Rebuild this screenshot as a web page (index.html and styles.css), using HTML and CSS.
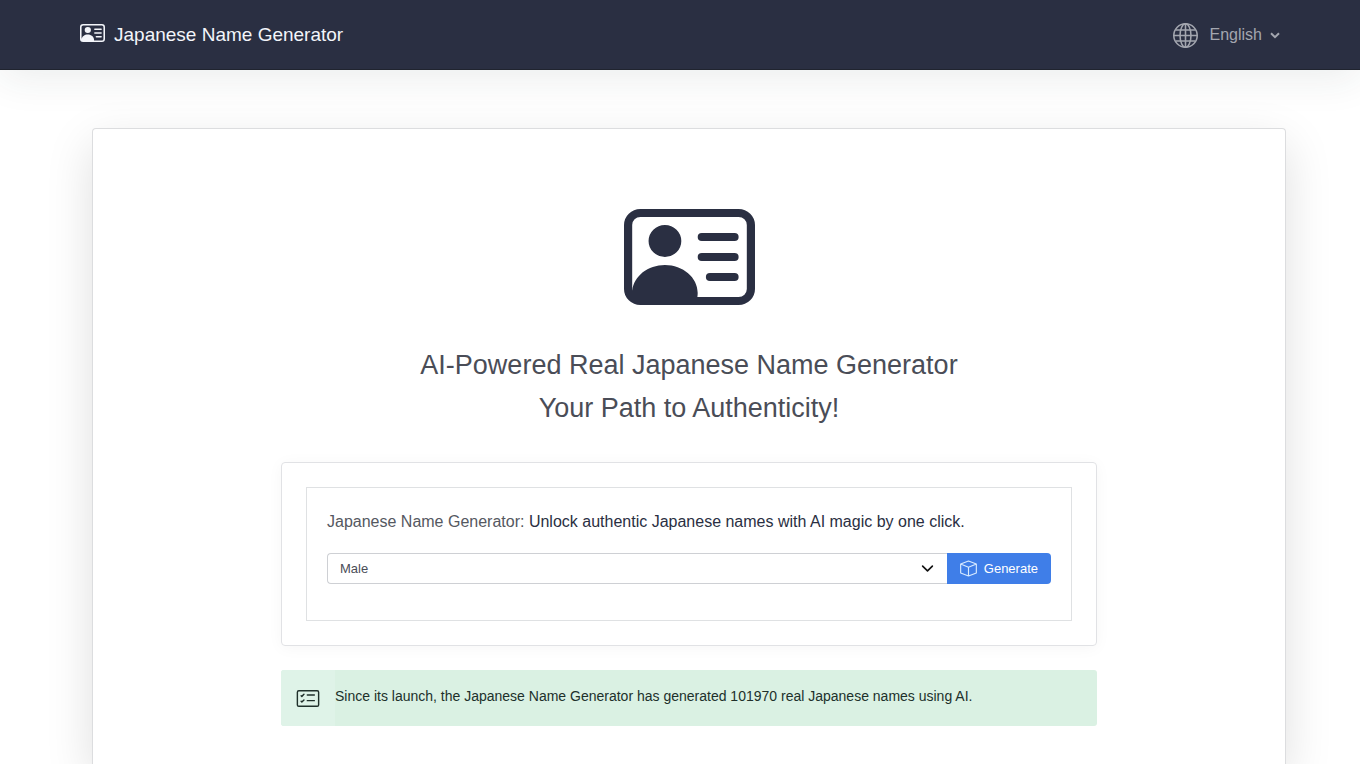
FILE: index.html
```html
<!DOCTYPE html>
<html lang="en">
<head>
<meta charset="utf-8">
<meta name="viewport" content="width=device-width, initial-scale=1">
<title>Japanese Name Generator</title>
<link rel="stylesheet" href="styles.css">
</head>
<body>
<svg class="sprite" aria-hidden="true">
  <symbol id="vcard" viewBox="0 2 16 12" preserveAspectRatio="none">
    <path d="M5 8a2 2 0 1 0 0-4 2 2 0 0 0 0 4Zm4-2.5a.5.5 0 0 1 .5-.5h4a.5.5 0 0 1 0 1h-4a.5.5 0 0 1-.5-.5ZM9 8a.5.5 0 0 1 .5-.5h4a.5.5 0 0 1 0 1h-4A.5.5 0 0 1 9 8Zm1 2.5a.5.5 0 0 1 .5-.5h3a.5.5 0 0 1 0 1h-3a.5.5 0 0 1-.5-.5Z"/>
    <path d="M2 2a2 2 0 0 0-2 2v8a2 2 0 0 0 2 2h12a2 2 0 0 0 2-2V4a2 2 0 0 0-2-2H2ZM1 4a1 1 0 0 1 1-1h12a1 1 0 0 1 1 1v8a1 1 0 0 1-1 1H8.960c.026-.163.04-.33.04-.5C9 10.567 7.210 9 5 9c-2.086 0-3.800 1.398-3.984 3.181A1.006 1.006 0 0 1 1 12V4Z"/>
  </symbol>
</svg>
<header class="navbar">
  <a class="brand" href="#"><svg class="brand-icon" aria-hidden="true"><use href="#vcard"/></svg><span>Japanese Name Generator</span></a>
  <button class="language" type="button" aria-haspopup="true">
    <svg class="globe" viewBox="0 0 16 16" aria-hidden="true"><g fill="none" stroke="currentColor"><circle cx="8" cy="8" r="7.5"/><ellipse cx="8" cy="8" rx="3.500" ry="7.500"/><path d="M8 .5v15M.5 8h15M1.700 4.500h12.600M1.700 11.500h12.600"/></g></svg>
    <span>English</span>
    <svg class="caret" viewBox="0 0 10 7" aria-hidden="true"><path d="M1 1.200 5 5.200l4-4" fill="none" stroke="currentColor" stroke-width="2"/></svg>
  </button>
</header>
<main class="card">
  <svg class="hero-icon" aria-hidden="true"><use href="#vcard"/></svg>
  <h1 class="title">AI-Powered Real Japanese Name Generator<br>Your Path to Authenticity!</h1>
  <div class="column">
    <section class="panel">
      <form class="generator">
        <label class="prompt" for="gender"><span class="prompt-name">Japanese Name Generator:</span> Unlock authentic Japanese names with AI magic by one click.</label>
        <div class="input-group">
          <div class="select-wrap">
            <select class="select" id="gender"><option>Male</option><option>Female</option></select>
            <svg class="select-arrow" viewBox="0 0 16 16" aria-hidden="true"><path d="m2 5 6 6 6-6" fill="none" stroke="currentColor" stroke-width="2" stroke-linecap="round" stroke-linejoin="round"/></svg>
          </div>
          <button class="generate" type="button"><svg class="box" viewBox="0 0 18 18" aria-hidden="true"><path d="M9 1 17.300 4.300v9.400L9 17 .7 13.700V4.300zM.7 4.300 9 7.600l8.300-3.300M9 7.600V17" fill="none" stroke="currentColor" stroke-width="1.200" stroke-linejoin="round"/></svg><span>Generate</span></button>
        </div>
      </form>
    </section>
    <div class="notice">
      <div class="notice-icon"><svg class="checklist" viewBox="0 0 16 12" aria-hidden="true"><g transform="translate(0 -2)"><path d="M14.500 3a.5.5 0 0 1 .5.5v9a.5.5 0 0 1-.5.5h-13a.5.5 0 0 1-.5-.5v-9a.5.5 0 0 1 .5-.5h13zm-13-1A1.500 1.500 0 0 0 0 3.500v9A1.500 1.500 0 0 0 1.500 14h13a1.500 1.500 0 0 0 1.500-1.500v-9A1.500 1.500 0 0 0 14.500 2h-13z"/><path d="M7 5.500a.5.5 0 0 1 .5-.5h5a.5.5 0 0 1 0 1h-5a.5.5 0 0 1-.5-.5zm-1.496-.854a.5.5 0 0 1 0 .708l-1.500 1.500a.5.5 0 0 1-.708 0l-.5-.5a.5.5 0 1 1 .708-.708l.146.147 1.146-1.147a.5.5 0 0 1 .708 0zM7 9.500a.5.5 0 0 1 .5-.5h5a.5.5 0 0 1 0 1h-5a.5.5 0 0 1-.5-.5zm-1.496-.854a.5.5 0 0 1 0 .708l-1.500 1.500a.5.5 0 0 1-.708 0l-.5-.5a.5.5 0 0 1 .708-.708l.146.147 1.146-1.147a.5.5 0 0 1 .708 0z"/></g></svg></div>
      <p class="notice-text">Since its launch, the Japanese Name Generator has generated 101970 real Japanese names using AI.</p>
    </div>
  </div>
</main>
</body>
</html>
```
FILE: styles.css
```css
* { box-sizing: border-box; }
html { overflow: hidden; }
body {
  margin: 0;
  min-height: 100vh;
  display: flex;
  flex-direction: column;
  background: #fff;
  color: #2a2f42;
  font: 16px/24px "Liberation Sans", Arial, sans-serif;
}
svg { display: block; fill: currentColor; }
.sprite { position: absolute; width: 0; height: 0; }
.navbar {
  display: flex;
  align-items: center;
  justify-content: space-between;
  padding: 21px 80px 20px;
  background: #2a2f42;
  border-bottom: 1px solid #20242f;
  box-shadow: 0 8px 40px rgba(30, 50, 50, .09);
}
.brand {
  display: flex;
  align-items: center;
  gap: 9px;
  color: #f3f5fa;
  font-size: 19px;
  line-height: 28px;
  text-decoration: none;
}
.brand-icon { width: 25px; height: 18px; margin-bottom: 4px; }
.language {
  display: flex;
  align-items: center;
  gap: 12px;
  padding: 0;
  border: 0;
  background: none;
  color: #a3a6af;
  font: inherit;
}
.globe { width: 25px; height: 25px; }
.caret { width: 10px; height: 7px; margin-left: -4px; }
.card {
  flex: 1 0 auto;
  display: flex;
  flex-direction: column;
  align-items: center;
  margin: 58px 74px 0 92px;
  padding: 80px 24px 38px;
  background: #fff;
  border: 1px solid #dcdddf;
  border-bottom: 0;
  border-radius: 4px 4px 0 0;
  box-shadow: 0 16px 48px rgba(0, 0, 0, .13);
}
.hero-icon { width: 131px; height: 96px; color: #2a2f42; }
.title {
  margin: 39px 0 32px;
  color: #4a4d57;
  font-size: 27px;
  font-weight: 400;
  line-height: 43px;
  text-align: center;
}
.column { width: 100%; max-width: 816px; }
.panel {
  padding: 24px;
  border: 1px solid #e1e2e5;
  border-radius: 4px;
  box-shadow: 0 2px 16px rgba(0, 0, 0, .04);
}
.generator { padding: 22px 20px 36px; border: 1px solid #dfe1e3; }
.prompt { display: block; margin-bottom: 19px; }
.prompt-name { color: #555861; }
.input-group { display: flex; height: 31px; }
.select-wrap { position: relative; flex: 1; }
.select {
  width: 100%;
  height: 100%;
  padding: 0 36px 0 12px;
  border: 1px solid #ced0d4;
  border-right: 0;
  border-radius: 4px 0 0 4px;
  background: #fff;
  color: #4a4d57;
  font: 13px/20px "Liberation Sans", Arial, sans-serif;
  appearance: none;
}
.select-arrow {
  position: absolute;
  top: 9px;
  right: 13px;
  width: 13px;
  height: 13px;
  color: #111;
  pointer-events: none;
}
.generate {
  display: flex;
  align-items: center;
  gap: 7px;
  padding: 0 13px;
  border: 0;
  border-radius: 0 4px 4px 0;
  background: #3f7ee8;
  color: #fff;
  font: 13px/20px "Liberation Sans", Arial, sans-serif;
}
.box { width: 17px; height: 17px; color: #d8ebff; }
.notice {
  display: flex;
  margin-top: 24px;
  min-height: 56px;
  border-radius: 3px;
  background: #daf1e3;
  color: #20302b;
  overflow: hidden;
}
.notice-icon { display: flex; align-items: center; padding: 0 15px; background: #dff3e8; }
.checklist { width: 24px; height: 17px; }
.notice-text { margin: 0; padding: 14px 0; font-size: 14px; line-height: 24px; }
```
